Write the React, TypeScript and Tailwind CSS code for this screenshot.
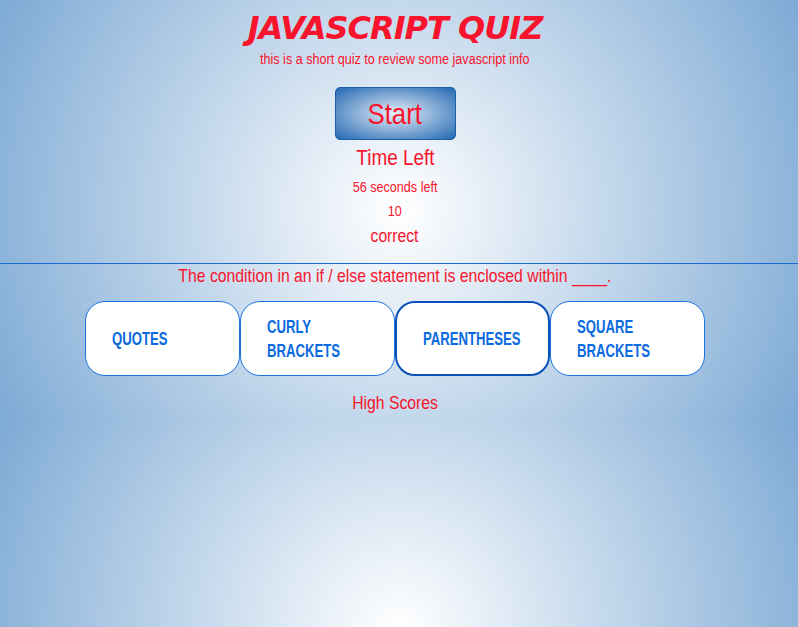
const answers = [
  { label: ["QUOTES"] },
  { label: ["CURLY", "BRACKETS"] },
  { label: ["PARENTHESES"], active: true },
  { label: ["SQUARE", "BRACKETS"] },
];

export default function App() {
  return (
    <div className="min-h-[627px] bg-[radial-gradient(circle,#ffffff_0%,#7eaad5_100%)] bg-[length:100%_420px] bg-repeat-y font-['Liberation_Sans',Arial,sans-serif] text-[#f8142c]">
      <header className="flex flex-col items-center border-b border-[#1a6ad0] pb-[16px] pr-[8px] pt-[9px] text-center">
        <h1 className="font-['DejaVu_Sans',sans-serif] text-[32px] font-bold italic leading-[38px] tracking-[-1px]">
          JAVASCRIPT QUIZ
        </h1>
        <p className="mt-[3px] scale-x-[0.9] text-[14px] leading-[18px]">
          this is a short quiz to review some javascript info
        </p>

        <button
          type="button"
          className="mt-[19px] h-[53px] w-[121px] rounded-[5px] border border-[#1c5ea8] bg-[radial-gradient(ellipse_at_center,#e6eef8_0%,#2268b2_100%)] text-[30px] leading-none text-[#f8142c]"
        >
          <span className="inline-block scale-x-[0.86]">Start</span>
        </button>

        <p className="mt-[6px] scale-x-[0.86] text-[22px] leading-[24px]">Time Left</p>
        <p className="mt-[8px] scale-x-[0.9] text-[14px] leading-[18px]">56 seconds left</p>
        <p className="mt-[6px] scale-x-[0.9] text-[14px] leading-[18px]">10</p>
        <p className="mt-[5px] scale-x-[0.87] text-[18px] leading-[22px]">correct</p>
      </header>

      <main className="flex flex-col items-center pr-[8px]">
        <p className="scale-x-[0.83] text-[19px] leading-[24px]">
          The condition in an if / else statement is enclosed within ____.
        </p>

        <div className="mt-[13px] flex">
          {answers.map((a) => (
            <button
              key={a.label.join(" ")}
              type="button"
              className={`flex h-[75px] w-[155px] flex-col items-start justify-center rounded-[20px] bg-white pl-[26px] text-left text-[18px] font-bold leading-[24px] text-[#0a6ae0] ${
                a.active ? "border-2 border-[#0a50b8]" : "border border-[#1a74e0]"
              }`}
            >
              {a.label.map((l) => (
                <span key={l} className="inline-block origin-left scale-x-[0.73]">
                  {l}
                </span>
              ))}
            </button>
          ))}
        </div>

        <p className="mt-[15px] scale-x-[0.875] text-[18px] leading-[24px]">High Scores</p>
      </main>
    </div>
  );
}
